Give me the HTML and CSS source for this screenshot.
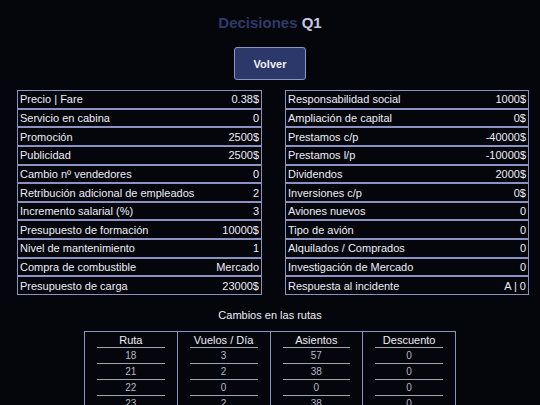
FILE: index.html
```html
<!DOCTYPE html>
<html lang="es">
<head>
<meta charset="utf-8">
<title>Decisiones Q1</title>
<link rel="stylesheet" href="styles.css">
</head>
<body>
<div class="page">
  <h1 class="title"><span class="dim">Decisiones</span> <span class="q">Q1</span></h1>
  <div class="btn-wrap"><button class="btn">Volver</button></div>
  <div class="grid">
    <div class="list">
      <div class="row"><span>Precio | Fare</span><span>0.38$</span></div>
      <div class="row"><span>Servicio en cabina</span><span>0</span></div>
      <div class="row"><span>Promoción</span><span>2500$</span></div>
      <div class="row"><span>Publicidad</span><span>2500$</span></div>
      <div class="row"><span>Cambio nº vendedores</span><span>0</span></div>
      <div class="row"><span>Retribución adicional de empleados</span><span>2</span></div>
      <div class="row"><span>Incremento salarial (%)</span><span>3</span></div>
      <div class="row"><span>Presupuesto de formación</span><span>10000$</span></div>
      <div class="row"><span>Nivel de mantenimiento</span><span>1</span></div>
      <div class="row"><span>Compra de combustible</span><span>Mercado</span></div>
      <div class="row"><span>Presupuesto de carga</span><span>23000$</span></div>
    </div>
    <div class="list">
      <div class="row"><span>Responsabilidad social</span><span>1000$</span></div>
      <div class="row"><span>Ampliación de capital</span><span>0$</span></div>
      <div class="row"><span>Prestamos c/p</span><span>-40000$</span></div>
      <div class="row"><span>Prestamos l/p</span><span>-10000$</span></div>
      <div class="row"><span>Dividendos</span><span>2000$</span></div>
      <div class="row"><span>Inversiones c/p</span><span>0$</span></div>
      <div class="row"><span>Aviones nuevos</span><span>0</span></div>
      <div class="row"><span>Tipo de avión</span><span>0</span></div>
      <div class="row"><span>Alquilados / Comprados</span><span>0</span></div>
      <div class="row"><span>Investigación de Mercado</span><span>0</span></div>
      <div class="row"><span>Respuesta al incidente</span><span>A | 0</span></div>
    </div>
  </div>
  <h2 class="sub">Cambios en las rutas</h2>
  <table class="routes">
    <thead>
      <tr><th><div>Ruta</div></th><th><div>Vuelos / Día</div></th><th><div>Asientos</div></th><th><div>Descuento</div></th></tr>
    </thead>
    <tbody>
      <tr><td><div>18</div></td><td><div>3</div></td><td><div>57</div></td><td><div>0</div></td></tr>
      <tr><td><div>21</div></td><td><div>2</div></td><td><div>38</div></td><td><div>0</div></td></tr>
      <tr><td><div>22</div></td><td><div>0</div></td><td><div>0</div></td><td><div>0</div></td></tr>
      <tr><td><div>23</div></td><td><div>2</div></td><td><div>38</div></td><td><div>0</div></td></tr>
    </tbody>
  </table>
</div>
</body>
</html>
```
FILE: styles.css
```css
html, body {
  margin: 0;
  padding: 0;
  background: #05060c;
  color: #e6e8f2;
  font-family: "Liberation Sans", Arial, sans-serif;
  height: 405px;
  overflow: hidden;
}
.page {
  width: 540px;
}
.title {
  margin: 0;
  padding-top: 14px;
  text-align: center;
  font-size: 15px;
  line-height: 18px;
  font-weight: bold;
}
.title .dim { color: #2f3a68; }
.title .q { color: #c4c9e4; }
.btn-wrap {
  display: flex;
  justify-content: center;
  margin-top: 15px;
}
.btn {
  width: 72px;
  height: 33px;
  background: #2d386a;
  border: 1px solid #8c94c4;
  border-radius: 3px;
  color: #eef0f8;
  font-family: "Liberation Sans", Arial, sans-serif;
  font-size: 11px;
  font-weight: bold;
  padding: 0;
}
.grid {
  display: grid;
  grid-template-columns: 245px 244px;
  column-gap: 23px;
  padding-left: 17px;
  margin-top: 10px;
}
.list {
  display: flex;
  flex-direction: column;
}
.row {
  box-sizing: border-box;
  height: 18.65px;
  border: 1px solid #8a92c4;
  display: flex;
  justify-content: space-between;
  align-items: center;
  padding: 0 2px 0 2px;
  font-size: 11px;
  color: #eceef6;
  white-space: nowrap;
}
.sub {
  margin: 13px 0 0 0;
  text-align: center;
  font-size: 11px;
  line-height: 14px;
  font-weight: normal;
  color: #eceef6;
}
.routes {
  margin: 9px 0 0 84px;
  width: 372px;
  border-collapse: collapse;
  table-layout: fixed;
  border: 1px solid #8a92c4;
}
.routes th, .routes td {
  border-left: 1px solid #8a92c4;
  border-right: 1px solid #8a92c4;
  padding: 0 12px;
  text-align: center;
}
.routes th div {
  height: 14px;
  line-height: 14px;
  font-size: 11px;
  font-weight: normal;
  color: #eceef6;
  border-bottom: 1px solid #a0a4b4;
  padding-top: 1px;
}
.routes td div {
  height: 15px;
  line-height: 15px;
  font-size: 10px;
  color: #b4b8c6;
  border-bottom: 1px solid #a0a4b4;
}
```
